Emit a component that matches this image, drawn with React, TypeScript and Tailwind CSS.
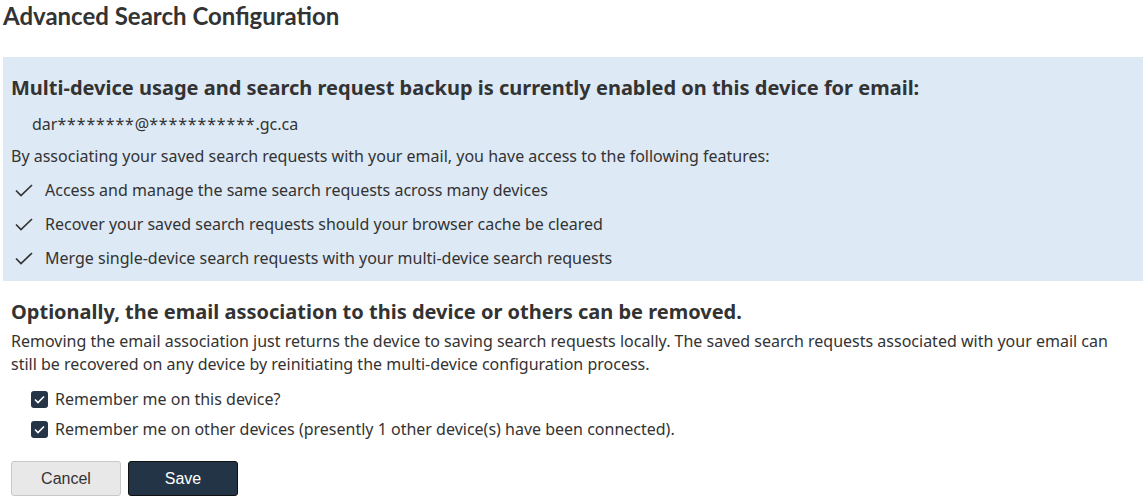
import React from 'react';

const features = [
  'Access and manage the same search requests across many devices',
  'Recover your saved search requests should your browser cache be cleared',
  'Merge single-device search requests with your multi-device search requests',
];

function CheckMark() {
  return (
    <svg width="20" height="16" viewBox="0 0 20 16" className="shrink-0">
      <path d="M2 8.5 L7 13.5 L18 3" fill="none" stroke="#333" strokeWidth="1.7" />
    </svg>
  );
}

function CheckedBox({ label }: { label: string }) {
  return (
    <label className="flex items-center gap-[7px] h-[30px]">
      <span className="w-[17px] h-[17px] rounded-[3px] bg-[#253447] flex items-center justify-center shrink-0">
        <svg width="11" height="9" viewBox="0 0 11 9">
          <path d="M1 4.5 L4 7.5 L10 1.5" fill="none" stroke="#fff" strokeWidth="1.6" />
        </svg>
      </span>
      <span>{label}</span>
    </label>
  );
}

export default function App() {
  return (
    <div className="bg-white text-[#333] font-['Noto_Sans',sans-serif] text-[16px] leading-[23px] w-[1147px] h-[500px] overflow-hidden">
      <h1 className="font-['Lato',sans-serif] text-[24px] leading-[32px] font-bold text-[#333] pl-[3px]">
        Advanced Search Configuration
      </h1>

      <section className="bg-[#dde9f5] ml-[3px] mr-[4px] mt-[25px] pl-[8px] pt-[18px] pb-[6px]">
        <h2 className="font-bold text-[20px] leading-[26px]">
          Multi-device usage and search request backup is currently enabled on this device for email:
        </h2>
        <p className="pl-[21px] mt-[12px]">
          dar<span className="tracking-[0.85px]">********</span>@<span className="tracking-[0.85px]">***********</span>.gc.ca
        </p>
        <p className="mt-[9px]">
          By associating your saved search requests with your email, you have access to the following features:
        </p>
        <ul className="mt-[5px]">
          {features.map((f) => (
            <li key={f} className="flex items-center gap-[11px] h-[34px] pl-[3px]">
              <CheckMark />
              <span>{f}</span>
            </li>
          ))}
        </ul>
      </section>

      <section className="px-[11px] pt-[18px]">
        <h2 className="font-bold text-[20px] leading-[26px]">
          Optionally, the email association to this device or others can be removed.
        </h2>
        <p className="mt-[5px]">
          Removing the email association just returns the device to saving search requests locally. The saved search requests associated with your email can still be recovered on any device by reinitiating the multi-device configuration process.
        </p>
        <div className="mt-[8px] pl-[20px]">
          <CheckedBox label="Remember me on this device?" />
          <CheckedBox label="Remember me on other devices (presently 1 other device(s) have been connected)." />
        </div>
        <div className="flex gap-[7px] mt-[17px] font-['Liberation_Sans',Arial,sans-serif]">
          <button className="w-[110px] h-[35px] bg-[#e8e8e8] border border-[#c8c8c8] rounded-[3px] text-[#333]">
            Cancel
          </button>
          <button className="w-[110px] h-[35px] bg-[#243447] border border-[#111] rounded-[3px] text-white">
            Save
          </button>
        </div>
      </section>
    </div>
  );
}
